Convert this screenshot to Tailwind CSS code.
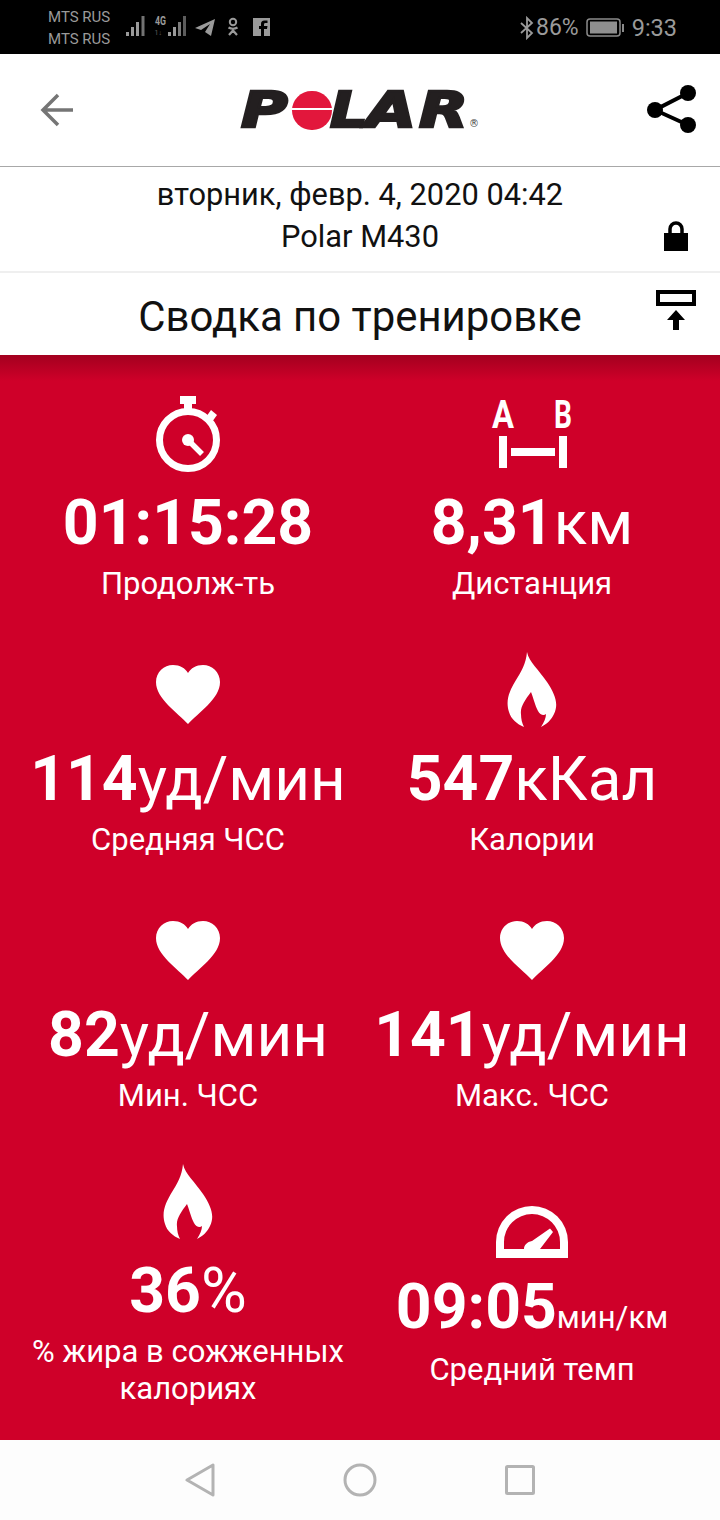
<!DOCTYPE html>
<html><head><meta charset="utf-8"><script src="https://cdn.jsdelivr.net/npm/@tailwindcss/browser@4"></script></head>
<body class="m-0 bg-white">
<div class="w-[720px] h-[1520px] flex flex-col overflow-hidden font-['Roboto',sans-serif] text-black">
  <!-- status bar -->
  <div class="h-[54px] bg-black flex items-center text-[#9a9a9a] relative">
    <div class="pl-[48px] w-[126px] text-[15px] leading-[22px] pt-[1px] whitespace-nowrap"><div>MTS RUS</div><div>MTS RUS</div></div>
    <svg width="150" height="30" viewBox="0 0 150 30" fill="#9a9a9a">
      <rect x="0" y="20" width="3" height="4"/><rect x="5" y="15" width="3" height="9"/><rect x="10" y="10" width="3" height="14"/><rect x="15.5" y="4" width="3" height="20" opacity=".75"/>
      <text x="29" y="13" font-size="13" font-weight="700" font-family="Roboto" textLength="11" lengthAdjust="spacingAndGlyphs">4G</text>
      <text x="28.5" y="23" font-size="7" font-family="Roboto" opacity=".6">1↓</text>
      <rect x="42" y="20" width="3" height="4"/><rect x="47" y="15" width="3" height="9"/><rect x="52" y="10" width="3" height="14" opacity=".8"/><rect x="57" y="4" width="3" height="20" opacity=".6"/>
      <path d="M69 16 L89 7 L85 24 L79 20 L84 12 L75 18 Z"/>
      <circle cx="107" cy="10" r="3.2" fill="none" stroke="#9a9a9a" stroke-width="2"/>
      <path d="M102.5 15.5 Q107 18 111.5 15.5 M107 17 V18 M103 23 L107 18.5 L111 23" stroke="#9a9a9a" stroke-width="2.2" fill="none"/>
      <path fill-rule="evenodd" d="M127 6 H144 V24 H138 V17 H141 L141.5 14 H138 V12.5 C138 11.5 138.5 11 139.5 11 H141.5 V8.5 H138.5 C136 8.5 135 10 135 12 V14 H133 V17 H135 V24 H127 Z"/>
    </svg>
    <div class="absolute left-[519px] top-[1px] h-[54px] flex items-center">
      <svg width="16" height="24" viewBox="0 0 16 24" fill="none" stroke="#9a9a9a" stroke-width="1.8"><path d="M2 7 L13 17 L8 22 V2 L13 7 L2 17"/></svg>
      <span class="text-[23px] ml-[1px] mt-[1px]">86%</span>
      <svg width="40" height="22" viewBox="0 0 40 22" class="ml-[7px]"><rect x="1" y="2" width="33" height="17" rx="3" fill="none" stroke="#8a8a8a" stroke-width="1.5"/><rect x="4" y="4.5" width="27" height="12" fill="#8f8f8f"/><rect x="36" y="7" width="2" height="8" fill="#8a8a8a"/></svg>
      <span class="text-[23.5px] ml-[6px] mt-[1px]">9:33</span>
    </div>
  </div>
  <!-- header -->
  <div class="h-[113px] border-b border-[#a8a8a8] relative flex items-center justify-between pl-[40px] pr-[24px]">
    <svg width="34" height="34" viewBox="0 0 34 34" fill="none" stroke="#757575" stroke-width="3.5"><path d="M33 17 H3 M18 2 L3 17 L18 32"/></svg>
    <div class="absolute left-[241px] top-[38px] w-[240px] h-[38px] font-['DejaVu_Sans'] font-bold italic text-[#231f20] text-[49px] leading-[38px]">
      <span class="absolute left-[0px] top-[0px] origin-left scale-x-[1.3] [-webkit-text-stroke:2.5px_#231f20]">P</span>
      <div class="absolute left-[51px] top-[-1px] w-[40px] h-[39px] rounded-full bg-[#e2173c] flex items-center"><div class="w-full h-[2px] mt-[-3px] bg-white"></div></div>
      <span class="absolute left-[89px] top-[0px] origin-left scale-x-[1.2] [-webkit-text-stroke:2.5px_#231f20]">L</span>
      <span class="absolute left-[125px] top-[0px] origin-left scale-x-[1.32] [-webkit-text-stroke:2.5px_#231f20]">A</span>
      <span class="absolute left-[178px] top-[0px] origin-left scale-x-[1.3] [-webkit-text-stroke:2.5px_#231f20]">R</span>
      <span class="absolute left-[228px] top-[26px] text-[10px] leading-[12px] not-italic font-normal text-[#444]">®</span>
    </div>
    <svg class="mt-[-2px]" width="49" height="48" viewBox="0 0 49 48" fill="#000"><circle cx="41" cy="8" r="8"/><circle cx="8" cy="25" r="8"/><circle cx="41" cy="40" r="8"/><path d="M41 8 L8 25 L41 40" fill="none" stroke="#000" stroke-width="4"/></svg>
  </div>
  <!-- info -->
  <div class="h-[106px] border-b-2 border-[#efefef] relative text-center text-[30.8px] leading-[42px] pt-[7px] text-[#111]">
    <div>вторник, февр. 4, 2020 04:42</div>
    <div>Polar M430</div>
    <svg class="absolute left-[664px] top-[54px]" width="24" height="30" viewBox="0 0 24 30" fill="#000"><path d="M0 12 H24 V30 H0 Z"/><path d="M6 13 V8 a6 6 0 0 1 12 0 V13" fill="none" stroke="#000" stroke-width="3.5"/></svg>
  </div>
  <!-- title -->
  <div class="h-[82px] relative bg-white text-center text-[41.9px] leading-[88px] text-[#111]">
    <div>Сводка по тренировке</div>
    <svg class="absolute left-[656px] top-[17px]" width="40" height="41" viewBox="0 0 40 41" fill="#000"><path fill-rule="evenodd" d="M0 0 H40 V16 H0 Z M4 4 V12 H36 V4 Z"/><path d="M20 20 L29 30 H23 V40 H17 V30 H11 Z"/></svg>
  </div>
  <!-- red -->
  <div class="h-[1085px] bg-[#cf0029] bg-[linear-gradient(#a3001f_0px,#cf0029_26px)] text-white px-[16px] pt-[31px] grid grid-cols-2 auto-rows-[256px] text-center">
    <div class="flex flex-col items-center">
      <div class="h-[100px] flex items-center justify-center"><svg class="mt-[-4px]" width="68" height="76" viewBox="0 0 68 76" fill="#fff"><path d="M26 0 H42 V8 H38 V14 H30 V8 H26 Z"/><circle cx="34" cy="44" r="28.5" fill="none" stroke="#fff" stroke-width="7"/><path d="M57 14 L63 19 L58 26 L52 21 Z"/><circle cx="34" cy="44" r="6"/><path d="M34 44 L48 58" stroke="#fff" stroke-width="5.5"/></svg></div>
      <div class="h-[72px] leading-[74px] text-[62.5px] font-bold whitespace-nowrap">01:15:28</div>
      <div class="text-[31px] leading-[52px]">Продолж-ть</div>
    </div>
    <div class="flex flex-col items-center">
      <div class="h-[100px] flex items-center justify-center"><svg class="mt-[-4px] overflow-visible" width="80" height="68" viewBox="0 0 80 68"><text x="0" y="28" font-family="Roboto" font-weight="700" font-size="38" fill="#fff" textLength="22" lengthAdjust="spacingAndGlyphs">A</text><text x="62" y="28" font-family="Roboto" font-weight="700" font-size="38" fill="#fff" textLength="18" lengthAdjust="spacingAndGlyphs">B</text><path fill="#fff" d="M7 36 H15 V68 H7 Z M67 36 H75 V68 H67 Z M19 48 H63 V56 H19 Z"/></svg></div>
      <div class="h-[72px] leading-[74px] text-[62.5px] whitespace-nowrap"><b class="font-bold">8,31</b><span class="text-[62px]">км</span></div>
      <div class="text-[31px] leading-[52px]">Дистанция</div>
    </div>

    <div class="flex flex-col items-center">
      <div class="h-[100px] flex items-center justify-center"><svg class="mt-[6px]" width="64" height="60" viewBox="0 0 64 60" fill="#fff"><path d="M32 59 C22 48 0 34 0 17 C0 7 8 0 17 0 C24 0 29 3 32 8 C35 3 40 0 47 0 C56 0 64 7 64 17 C64 34 42 48 32 59 Z"/></svg></div>
      <div class="h-[72px] leading-[74px] text-[62.5px] whitespace-nowrap"><b class="font-bold">114</b><span class="text-[62px]">уд/мин</span></div>
      <div class="text-[31px] leading-[52px]">Средняя ЧСС</div>
    </div>
    <div class="flex flex-col items-center">
      <div class="h-[100px] flex items-center justify-center"><svg class="mt-[-5px]" width="50" height="75" viewBox="0 0 50 75" fill="#fff"><path d="M20 0 C22 10 32 18 40 30 C48 42 52 52 47 62 C44 68 40 72 34 75 C37 70 39 66 39 62 C37 64 33 63 31 59 C28 53 27 48 24 40 C18 48 13 55 14 62 C14 67 15 71 17 75 C10 72 4 67 2 60 C-2 48 3 38 9 28 C14 20 19 12 20 0 Z"/></svg></div>
      <div class="h-[72px] leading-[74px] text-[62.5px] whitespace-nowrap"><b class="font-bold">547</b><span class="text-[62px]">кКал</span></div>
      <div class="text-[31px] leading-[52px]">Калории</div>
    </div>

    <div class="flex flex-col items-center">
      <div class="h-[100px] flex items-center justify-center"><svg class="mt-[6px]" width="64" height="60" viewBox="0 0 64 60" fill="#fff"><path d="M32 59 C22 48 0 34 0 17 C0 7 8 0 17 0 C24 0 29 3 32 8 C35 3 40 0 47 0 C56 0 64 7 64 17 C64 34 42 48 32 59 Z"/></svg></div>
      <div class="h-[72px] leading-[74px] text-[62.5px] whitespace-nowrap"><b class="font-bold">82</b><span class="text-[62px]">уд/мин</span></div>
      <div class="text-[31px] leading-[52px]">Мин. ЧСС</div>
    </div>
    <div class="flex flex-col items-center">
      <div class="h-[100px] flex items-center justify-center"><svg class="mt-[6px]" width="64" height="60" viewBox="0 0 64 60" fill="#fff"><path d="M32 59 C22 48 0 34 0 17 C0 7 8 0 17 0 C24 0 29 3 32 8 C35 3 40 0 47 0 C56 0 64 7 64 17 C64 34 42 48 32 59 Z"/></svg></div>
      <div class="h-[72px] leading-[74px] text-[62.5px] whitespace-nowrap"><b class="font-bold">141</b><span class="text-[62px]">уд/мин</span></div>
      <div class="text-[31px] leading-[52px]">Макс. ЧСС</div>
    </div>

    <div class="flex flex-col items-center">
      <div class="h-[100px] flex items-center justify-center"><svg class="mt-[-6px]" width="50" height="75" viewBox="0 0 50 75" fill="#fff"><path d="M20 0 C22 10 32 18 40 30 C48 42 52 52 47 62 C44 68 40 72 34 75 C37 70 39 66 39 62 C37 64 33 63 31 59 C28 53 27 48 24 40 C18 48 13 55 14 62 C14 67 15 71 17 75 C10 72 4 67 2 60 C-2 48 3 38 9 28 C14 20 19 12 20 0 Z"/></svg></div>
      <div class="h-[72px] leading-[74px] text-[62.5px] font-bold whitespace-nowrap">36<span class="font-normal">%</span></div>
      <div class="text-[31px] leading-[37px] mt-[7px]">% жира в сожженных<br>калориях</div>
    </div>
    <div class="flex flex-col items-center mt-[16px]">
      <div class="h-[100px] flex items-center justify-center"><svg class="mt-[23px]" width="72" height="52" viewBox="0 0 72 52" fill="#fff"><path fill-rule="evenodd" d="M0 52 V36 A36 36 0 0 1 72 36 V52 Z M8 43 H28 C28 39 31 36 36 35 L54 22.5 L57 26 L44 43 H64 V36 A28 28 0 0 0 8 36 Z"/></svg></div>
      <div class="h-[72px] leading-[74px] text-[62.5px] whitespace-nowrap"><b class="font-bold">09:05</b><span class="text-[31px]">мин/км</span></div>
      <div class="text-[31px] leading-[52px] mt-[2px]">Средний темп</div>
    </div>
  </div>
  <!-- nav -->
  <div class="h-[80px] bg-[#fdfdfd] relative">
    <svg class="absolute left-[185px] top-[23px]" width="30" height="34" viewBox="0 0 30 34" fill="none" stroke="#b3b3b3" stroke-width="3" stroke-linejoin="round"><path d="M2 17 L28 2 V32 Z"/></svg>
    <svg class="absolute left-[343px] top-[23px]" width="34" height="34" viewBox="0 0 34 34" fill="none" stroke="#b3b3b3" stroke-width="3"><circle cx="17" cy="17" r="15"/></svg>
    <svg class="absolute left-[505px] top-[25px]" width="30" height="30" viewBox="0 0 30 30" fill="none" stroke="#b3b3b3" stroke-width="3" stroke-linejoin="round"><rect x="1.5" y="1.5" width="27" height="27" rx="1"/></svg>
  </div>
</div>
</body></html>
